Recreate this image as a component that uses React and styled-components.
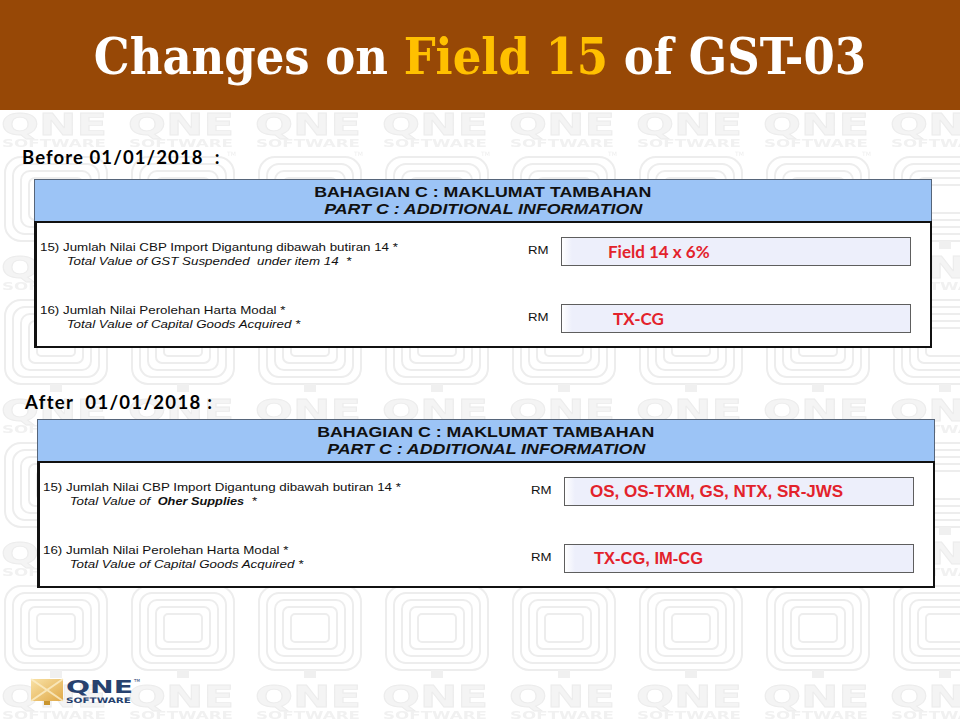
import React from "react";
import styled, { createGlobalStyle } from "styled-components";

const GlobalStyle = createGlobalStyle`
  html, body {
    margin: 0;
    padding: 0;
    background: #ffffff;
  }
`;

const Page = styled.div`
  position: relative;
  width: 960px;
  height: 720px;
  overflow: hidden;
  background: #ffffff;
  display: flex;
  flex-direction: column;
  font-family: "Liberation Sans", Arial, sans-serif;
`;

const Watermark = styled.svg`
  position: absolute;
  left: 0;
  top: 110px;
  z-index: 0;
`;

const Header = styled.header`
  position: relative;
  z-index: 1;
  height: 110px;
  flex-shrink: 0;
  background: #974806;
  display: flex;
  align-items: center;
  justify-content: center;
`;

const Title = styled.h1`
  margin: 0;
  padding-top: 4px;
  font-family: "DejaVu Serif Condensed", "DejaVu Serif", serif;
  font-weight: 700;
  font-size: 50px;
  line-height: 60px;
  color: #ffffff;
  white-space: pre;
`;

const Highlight = styled.span`
  color: #ffc000;
`;

const Content = styled.main`
  position: relative;
  z-index: 1;
  display: flex;
  flex-direction: column;
`;

const Section = styled.section`
  margin-top: ${(p) => p.$top}px;
  display: flex;
  flex-direction: column;
`;

const DateLabel = styled.div`
  margin-left: ${(p) => p.$left}px;
  margin-bottom: ${(p) => p.$gap}px;
  font-family: Lato, "Open Sans", sans-serif;
  font-weight: 700;
  font-size: 18.5px;
  line-height: 22px;
  letter-spacing: ${(p) => p.$spacing}px;
  color: #000000;
  white-space: pre;
`;

const Form = styled.div`
  margin-left: ${(p) => p.$left}px;
  width: 898px;
`;

const FormHead = styled.div`
  height: 41px;
  background: #9cc4f6;
  border: 1px solid #56657a;
  border-bottom: none;
  display: flex;
  flex-direction: column;
  align-items: center;
  justify-content: center;
  font-weight: 700;
  font-size: 14px;
  line-height: 17px;
  color: #111111;
`;

const HeadLine = styled.div`
  font-style: ${(p) => (p.$italic ? "italic" : "normal")};
  transform: scaleX(1.27);
  transform-origin: center;
`;

const FormBody = styled.div`
  background: #ffffff;
  border: 2px solid #111111;
  border-left-width: 3px;
  padding: 14px 19px 13px 3px;
  display: flex;
  flex-direction: column;
  gap: 38px;
`;

const Row = styled.div`
  display: grid;
  grid-template-columns: 488px 33px 350px;
  height: 29px;
`;

const Item = styled.div`
  margin-top: ${(p) => p.$lift}px;
  font-size: 11.5px;
  line-height: 14px;
  color: #111111;
  white-space: pre;
  transform: scaleX(1.16);
  transform-origin: left;
`;

const ItemSub = styled.div`
  padding-left: 23px;
  font-style: italic;
`;

const Strong = styled.span`
  font-weight: 700;
  font-size: 11px;
`;

const Currency = styled.div`
  padding-top: 6px;
  font-size: 11.5px;
  line-height: 14px;
  color: #111111;
  transform: scaleX(1.15);
  transform-origin: left;
`;

const ValueBox = styled.div`
  box-sizing: border-box;
  height: 29px;
  border: 1px solid #5e5e5e;
  background: linear-gradient(to right, #ffffff 0, #edeffb 10px, #edeffb 100%);
  display: flex;
  align-items: center;
  padding-left: ${(p) => p.$indent}px;
  font-family: ${(p) => (p.$humanist ? 'Lato, "Open Sans", sans-serif' : '"Liberation Sans", Arial, sans-serif')};
  font-weight: 700;
  font-size: ${(p) => p.$size}px;
  color: #e3222b;
  white-space: pre;
`;

const Footer = styled.footer`
  position: relative;
  z-index: 1;
  margin-top: auto;
  padding: 0 0 13px 30px;
  display: flex;
`;

const WatermarkTile = () => (
  <Watermark width="960" height="610" viewBox="0 0 960 610">
    <defs>
      <pattern id="qneTile" x="0" y="0" width="127" height="143" patternUnits="userSpaceOnUse">
        <text
          x="1"
          y="25"
          fontFamily="DejaVu Sans, sans-serif"
          fontWeight="900"
          fontSize="31"
          textLength="106"
          lengthAdjust="spacingAndGlyphs"
          fill="#f4f4f4"
          stroke="#ececec"
          strokeWidth="0.8"
        >
          QNE
        </text>
        <text
          x="2"
          y="37"
          fontFamily="DejaVu Sans, sans-serif"
          fontWeight="700"
          fontSize="11"
          textLength="104"
          lengthAdjust="spacingAndGlyphs"
          fill="#f1f1f1"
        >
          SOFTWARE
        </text>
        <text x="100" y="46" fontFamily="DejaVu Sans, sans-serif" fontSize="6" fill="#eeeeee">
          TM
        </text>
        <g fill="none" stroke="#ededed" strokeWidth="2">
          <rect x="5" y="47" width="102" height="84" rx="16" />
          <rect x="13" y="54" width="86" height="70" rx="12" />
          <rect x="21" y="61" width="70" height="56" rx="9" />
          <rect x="29" y="68" width="54" height="42" rx="6" />
          <rect x="37" y="75" width="38" height="28" rx="4" />
        </g>
        <rect x="50" y="131" width="12" height="8" fill="#f0f0f0" />
      </pattern>
    </defs>
    <rect x="0" y="0" width="960" height="610" fill="url(#qneTile)" />
  </Watermark>
);

const QneLogo = () => (
  <svg width="112" height="30" viewBox="0 0 112 30">
    <defs>
      <linearGradient id="logoGold" x1="0" y1="0" x2="1" y2="1">
        <stop offset="0" stopColor="#f9e2a6" />
        <stop offset="1" stopColor="#e0a948" />
      </linearGradient>
    </defs>
    <rect x="1" y="2" width="32" height="22" fill="url(#logoGold)" />
    <path d="M1 2 L17 13 L33 2 M1 24 L17 13 L33 24" stroke="#fbeec8" strokeWidth="2" fill="none" opacity="0.8" />
    <rect x="14" y="24" width="6" height="4" fill="#c9952f" />
    <text
      x="36"
      y="16"
      fontFamily="DejaVu Sans, sans-serif"
      fontWeight="900"
      fontSize="18"
      textLength="67"
      lengthAdjust="spacingAndGlyphs"
      fill="#27416e"
    >
      QNE
    </text>
    <text
      x="36"
      y="25.5"
      fontFamily="DejaVu Sans, sans-serif"
      fontWeight="700"
      fontSize="7.5"
      textLength="65"
      lengthAdjust="spacingAndGlyphs"
      fill="#27416e"
    >
      SOFTWARE
    </text>
    <text x="104" y="5" fontFamily="DejaVu Sans, sans-serif" fontSize="4" fill="#27416e">
      TM
    </text>
  </svg>
);

const PartC = ({ left, first, second }) => (
  <Form $left={left}>
    <FormHead>
      <HeadLine>BAHAGIAN C : MAKLUMAT TAMBAHAN</HeadLine>
      <HeadLine $italic>PART C : ADDITIONAL INFORMATION</HeadLine>
    </FormHead>
    <FormBody>
      <Row>
        <Item $lift={3}>
          <div>15) Jumlah Nilai CBP Import Digantung dibawah butiran 14 *</div>
          <ItemSub>{first.sub}</ItemSub>
        </Item>
        <Currency>RM</Currency>
        <ValueBox $indent={first.indent} $size={first.size} $humanist={first.humanist}>
          {first.value}
        </ValueBox>
      </Row>
      <Row>
        <Item $lift={-1}>
          <div>16) Jumlah Nilai Perolehan Harta Modal *</div>
          <ItemSub>Total Value of Capital Goods Acquired *</ItemSub>
        </Item>
        <Currency>RM</Currency>
        <ValueBox $indent={second.indent} $size={second.size} $humanist={second.humanist}>
          {second.value}
        </ValueBox>
      </Row>
    </FormBody>
  </Form>
);

export default function App() {
  return (
    <>
      <GlobalStyle />
      <Page>
        <WatermarkTile />
        <Header>
          <Title>
            Changes on <Highlight>Field 15</Highlight> of GST-03
          </Title>
        </Header>
        <Content>
          <Section $top={36}>
            <DateLabel $left={22} $gap={11} $spacing={1.1}>Before 01/01/2018  :</DateLabel>
            <PartC
              left={34}
              first={{
                sub: "Total Value of GST Suspended  under item 14  *",
                value: "Field 14 x 6%",
                indent: 46,
                size: 17,
                humanist: true,
              }}
              second={{ value: "TX-CG", indent: 51, size: 17, humanist: true }}
            />
          </Section>
          <Section $top={43}>
            <DateLabel $left={25} $gap={6} $spacing={1.3}>After  01/01/2018 :</DateLabel>
            <PartC
              left={37}
              first={{
                sub: (
                  <>
                    Total Value of  <Strong>Oher Supplies</Strong>  *
                  </>
                ),
                value: "OS, OS-TXM, GS, NTX, SR-JWS",
                indent: 25,
                size: 17,
              }}
              second={{ value: "TX-CG, IM-CG", indent: 29, size: 16.5 }}
            />
          </Section>
        </Content>
        <Footer>
          <QneLogo />
        </Footer>
      </Page>
    </>
  );
}
